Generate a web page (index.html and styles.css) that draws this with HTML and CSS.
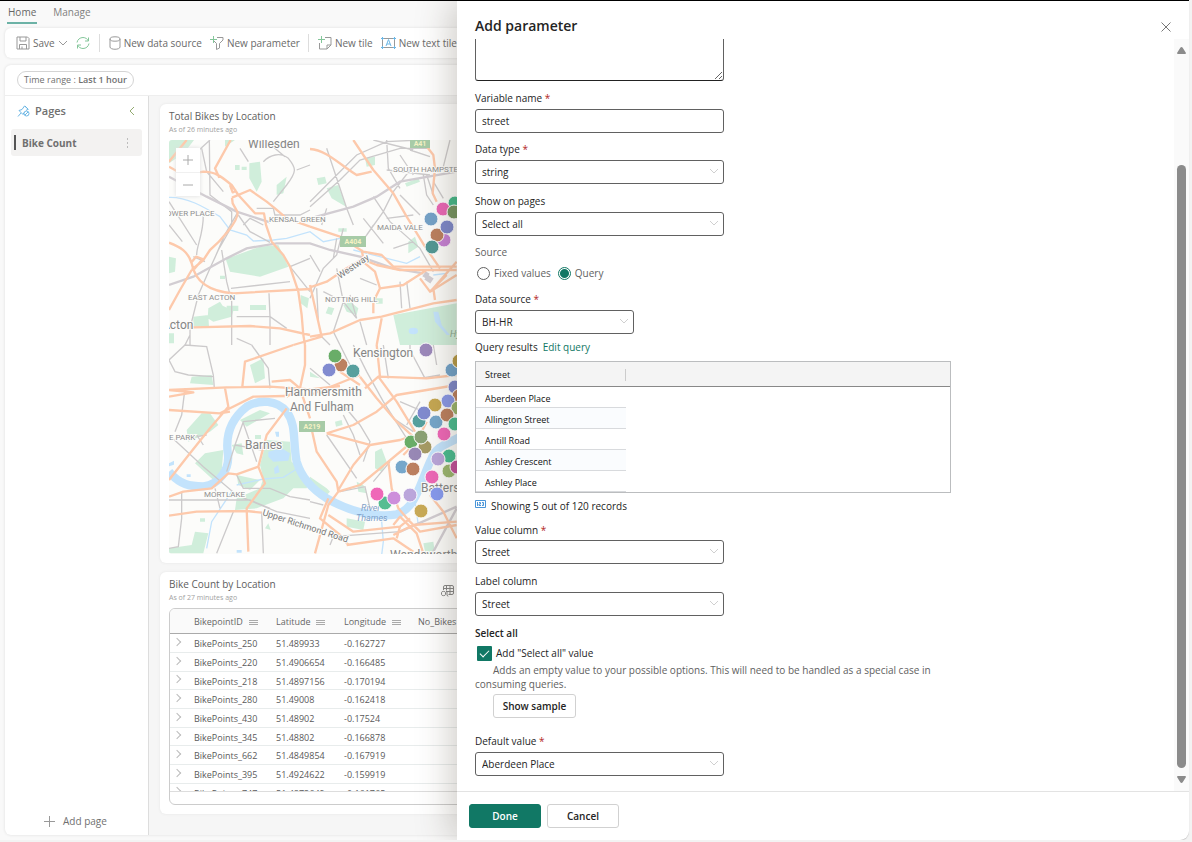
FILE: index.html
```html
<!DOCTYPE html>
<html lang="en">
<head>
<meta charset="utf-8">
<title>Dashboard - Add parameter</title>
<link rel="stylesheet" href="styles.css">
</head>
<body>
<div class="app">
  <main class="dashboard">
    <nav class="tabs">
      <a class="tab tab-active" href="#home">Home</a>
      <a class="tab" href="#manage">Manage</a>
    </nav>
    <div class="toolbar">
      <button class="tool save" type="button">
        <svg width="14" height="14" viewBox="0 0 14 14"><path d="M1 1h10.500L13 2.500V13H1zM4 1v4h6V1M3.500 13V8.500h7V13M6 10.500V13"/></svg>
        <span>Save</span>
        <svg class="caret" width="10" height="6" viewBox="0 0 10 6"><path d="M1 1l4 4 4-4"/></svg>
      </button>
      <button class="tool refresh" type="button" aria-label="Refresh">
        <svg class="green" width="16" height="14" viewBox="0 0 16 14"><path d="M2 6.500C2.500 3.500 5 1.500 8 1.500c2.500 0 4.500 1.500 5.500 3.500M13.500 1.500V5H10M14 7.500c-.5 3-3 5-6 5-2.500 0-4.500-1.500-5.500-3.500M2.500 12.500V9H6"/></svg>
      </button>
      <span class="divider"></span>
      <button class="tool" type="button">
        <svg width="12" height="14" viewBox="0 0 12 14"><ellipse cx="6" cy="3" rx="5" ry="2.200"/><path d="M1 3v8c0 3 10 3 10 0V3"/></svg>
        <span>New data source</span>
      </button>
      <button class="tool" type="button">
        <svg width="14" height="14" viewBox="0 0 14 14"><path d="M7 1.500h6v2.500L9.500 7.500V12l-3 1.500v-6L3.500 4.500"/><path class="green" d="M3.500 0v7M0 3.500h7"/></svg>
        <span>New parameter</span>
      </button>
      <span class="divider"></span>
      <button class="tool" type="button">
        <svg width="14" height="14" viewBox="0 0 14 14"><path d="M7 1.500h6v7.500l-4 4H1.500V7M13 9H9v4"/><path class="green" d="M3.500 0v7M0 3.500h7"/></svg>
        <span>New tile</span>
      </button>
      <button class="tool" type="button">
        <svg width="15" height="12" viewBox="0 0 15 12"><path d="M1.500 1.500h12v9h-12z"/><path class="blue" d="M5 9l2.500-6.500L10 9M6 7h3M0 1.500h3M1.500 0v3M12 1.500h3M13.500 0v3M0 10.500h3M1.500 9v3M12 10.500h3M13.500 9v3"/></svg>
        <span>New text tile</span>
      </button>
    </div>
    <div class="workspace">
      <div class="filters"><button class="pill" type="button">Time range : <b>Last 1 hour</b></button></div>
      <div class="work-body">
        <aside class="pages">
          <div class="pages-head">
            <svg class="blue" width="13" height="12" viewBox="0 0 13 12"><path d="M1 11.500l3-3.500M2 5.500l4 4 1-2M2 5.500l3-1 2.500-3.500L11 4 9 5.500M8 1l3.500 3.500"/><circle cx="9.500" cy="8.500" r="2.500"/><path d="M8 10l3-3"/></svg>
            <h2>Pages</h2>
            <button class="bare" type="button" aria-label="Collapse"><svg class="collapse" width="6" height="10" viewBox="0 0 6 10"><path d="M5 1L1 5l4 4"/></svg></button>
          </div>
          <div class="page-item">
            <span class="page-mark"></span><span class="page-name">Bike Count</span>
            <button class="bare" type="button" aria-label="More options"><svg class="dots" width="2" height="10" viewBox="0 0 2 10"><path d="M0 1h1M0 5h1M0 9h1"/></svg></button>
          </div>
          <button class="add-page" type="button"><svg width="11" height="11" viewBox="0 0 11 11"><path d="M5.500 0v11M0 5.500h11"/></svg>Add page</button>
        </aside>
        <section class="tiles">
          <article class="tile">
            <h3>Total Bikes by Location</h3>
            <p class="age">As of 26 minutes ago</p>
            <div class="map">
              <svg class="map-canvas" width="100%" height="414">
                <g transform="translate(-9 -5) scale(.33333)">
                  <g class="park">
                    <path d="M27 15h75l-30 40-45 30zM197 372l103-37 55-5 30 65-85 30-90-15zM268 85l32-5 5 60-15 30-22-40zM350 150l30-25-10 50-20 5zM145 520l35-20 8 12 32 15-5 18-55 15-17-10zM100 545l45-5 2 35h-47zM27 365l21 5-3 40-18 5zM270 510h48v15h-48zM225 90h14v15h-14zM245 95h15v10h-15zM200 512h35v16h-35zM27 595h15v30H27zM195 15h30l-30 20zM180 422h15v10h-15z"/>
                    <path d="M500 160l35-10 23 65-43-25zM700 540l190-35v125H720zM615 70l30-5v25l-25 5zM470 130l25-5 5 20-25 5zM550 510l20-10 25 20-5 20-30-10zM735 145l40-15 5 10-40 15zM535 280h25v10h-25zM745 320l20-15 10 30-30 20zM505 515l18 5-8 20-18-5zM422 480l25 10-5 30-20-15zM648 490h20v16h-20z"/>
                    <path d="M125 835l25 0 25 35-25 20-65 30-5-35zM135 955l55-10-5 65-25 25-55-50zM320 915l70 5 5 60 55 50-10 30-40 0-30 30-80 30-65 5 5-35 70-30 10-30-10-40zM230 1020l70 15-30 30-35-15zM27 1240l68-10 10-40 40 5-15 60H27zM240 855l60-30 30 10-70 40zM270 690l40-20 5 60-30 15zM95 725l60-5 5 30-70-5zM285 900h18v12h-18zM215 930l30-5 5 35-20-5zM120 1150h15v10h-15zM315 1180l10-15 7 20z"/>
                    <path d="M450 1025l50 35 10 10-20 20-40-50zM645 950l20-10 15 40-15 30-20-10zM560 1150l55 10-5 25-50-10zM790 1225l30-5 5 35-30-5zM525 860l20-5 3 15-20 5zM590 1040l20 10 10 25-25-5zM450 710l30 20-30-5z"/>
                  </g>
                  <g class="river">
                    <path class="river-wide" d="M27 1010C60 1050 90 1054 130 1054C180 1050 208 1000 204 960C195 900 215 850 260 815C300 792 350 795 380 830C410 870 398 920 410 980C425 1030 460 1065 500 1090C560 1125 640 1150 710 1138C770 1120 780 1040 815 970C830 930 870 925 900 905"/>
                    <path d="M27 187c53-2 103 28 153 58l30 40 50 15 20 18 60-3 40-5 70-20 40 30 50-10M580 345l40 10 120 30 40-20M820 420l40-5M665 1160l5 60-5 40M230 1050l80-18 60-5 40-25M140 1240l15-80 60-90M765 1100l10 70"/>
                    <path class="water" d="M820 530l15 0 10 40 25 30-10 0-35-40zM746 588a14 10 0 1 0 28 0a14 10 0 1 0-28 0M325 950l40-10 25 15-5 22-45 3-15-15zM342 1000l12-10 5 22-15 5zM345 890h12v15h-8zM230 1245h15v8h-15zM80 1018h12v8h-12zM27 985l15-8v12l-15 5z"/>
                  </g>
                  <g class="street">
                    <path d="M148 15l2 165 65 50v45l-40 70-25 55-35 80-25 100v50M125 40l15 70 50 60M310 80c20-20 50-30 75-10 25 30 25 40-5 80l-40 50M450 90l-40 15M240 40l25 40M120 230l10 10c0 60-20 90-20 120M27 200l83 130M185 345l15 95 15 60v130M213 460l177-20M327 475l3 70 50 35M230 545h100M390 395l60 75M233 232l-40 70-30 70M235 240l35 50 60 32M250 270l20-20 40 20M290 220h50l5 22M390 395l60-25M315 15l60 50M150 15L90 70M100 365l35 15M345 240h75l30-15M230 610l45 20M90 600l-15 30M27 270l40 50M330 545v85"/>
                    <path d="M450 200l80-80 60-60 90-40 100-5M450 215l90-80 60-60 120-35 90 0M500 40l30 90 30 90 20 50M500 220l-15 50M610 250l60 75M750 105l-50 65-30 60-50 70M680 105l130 15M680 15l5 85 35 60M640 15l120 30M450 490l40-90 40-40 20-80M530 400l20 100 40 50M470 460l5 100M640 185l50 75 90 80 40 70M720 440l5 80M740 440l10 80M570 480l20 70M790 120l10 60 20 30M800 120l20 60M680 250l80-10M700 340l60-20M450 360l30 50M530 310l-10 60M490 470l50 25M600 430l50 20M870 15l-20 80M600 560l20 70M550 500l-30 90 20 40M480 600l30 30M750 45l60 20M720 60l40 60M640 270l-40 60M820 140l30 50M720 180l60 60"/>
                    <path d="M27 675l48-45 65 5 20 85 3 40M27 675l18 35 40 10 75 5M75 760l-10 80-20 50M345 850l-95 10-25 70-25 80M250 865l40 115M220 1130l-50 125M305 1130l5 125M65 1070v80l-10 85-28 5M230 1020l20 40 80 0 60 25 60 10M275 630l50 70 5 60M165 1060l15 60M27 1095h243l60 25M27 900l33 30 70 65 100 85 120 50 100 20M110 900l20 30M225 930l80 15M140 900l-30 5"/>
                    <path d="M550 810l50 60 30 50-20 60M500 900l90 130M580 630l40 80 50 90 70 110M670 630l15 100M750 645l45 85M450 1100l40 10M510 1230l10-25 200-15M540 1070l75-15 15 65M780 730l60-10M550 840l30 60 20 60M690 980l-50 60M450 700l60 50M540 630l30 60M750 630v15M820 630l10 60M720 800l70 30M700 850l60 40M780 800l-40 70"/>
                  </g>
                  <g class="rail">
                    <path d="M27 125l113 60 90 45 100 32M27 450l73-25 100-55 60-30 90-15h100l60 20 90 20 100 35 90 15"/>
                    <path d="M450 250l130-35 70-30 70-45 170-30M720 1190l170-75M820 1250l70-130"/>
                    <path class="station" d="M792 416l12 8M798 426l18 12"/>
                  </g>
                  <g class="road">
                    <path d="M212 15l-47 85 13 28M80 15L27 80M27 95l45 25 58-10c40 0 60 20 85 40l20 30 50 55h27l6 35 17 50 35 40 20 35 25 75 10 70 5 60 5 30M210 150l8 22 12-6M216 188l54-23 50 35 25 20 35 30 70 25M216 188l2 17 15 27c2 28-53 88-83 113l-20 30-35 30M27 323c33 12 58 27 68 62 10 55 55 85 125 90l230-13M92 385l16-20 20 7-25 30M95 405l-35 60-33 60M100 577l170-4 90 7 90 20"/>
                    <path d="M450 42c50 3 90 48 140 78l45-10M580 15l60 90 60 70 40 70 55 90 45 65M785 15l35 45 5 40-7 75 12 25M450 275l90 30 70 45 55 10 35 35h190M600 370l50 20 70 15h170M605 345l5 25M450 457l50-17 60-40 50-30M615 385l30 25 15 50-20 40v35M660 460l70-10 70-45M450 605l60-10 90-40 65-10 155-40 70-10M450 450l35 155-85 25M665 550l-15 80M825 495l-5-35 70-80M780 430l30 40 50-50M810 470l80-50"/>
                    <path d="M27 765l173-8 130-2 120 8 90-10M27 785l73-13-73-7M27 825l153 10 30-15 70-35 95-2M195 760l10 55-55 65-60 75-63 80M400 630l-145 50-8 75M435 630v60l-15 70 30 90M27 1085l43-15 85-10 50-45 25 3 65-23 20 50-55 75 5 130M27 1142l83-12 150-2 45 5M380 820l-60 80-25 95M335 740l55-5 30 25-40 25M180 835l30-5"/>
                    <path d="M450 860l20 90 60 90 5 30-30 40-40 145M500 895l80-25 70-40 60-50 180-30M500 895l130 35 90-15 30-10M600 725l50 65 60 70 50 45M615 760l40-35 145 5 90-10M655 725l55 75 55 90M535 1070l65-20 85-70 60-50M685 980l10 80 20 60 35 40 30 30 110-20M535 1065l45-75 50-60M505 1140l45 30 30 20 140-15 30-25M560 1230l140-20 60 40M720 1175l-10 35M810 1080l40 50 40 80M450 780l150-60M650 630l10 95M540 710l60 40M505 1090l-25 60 60 50 25 30M700 1200l60-30 130-10M700 1170l20-25 50 50 20 60M730 960l40-40 30-60"/>
                  </g>
                </g>
                <g class="badge-road"><rect x="171" y="96" width="26" height="11"/><rect x="130" y="281" width="26" height="11"/><rect x="241" y="-3" width="20" height="11"/>
                  <text x="184" y="104">A404</text><text x="143" y="289">A219</text><text x="251" y="6">A41</text></g>
                <g class="place">
                  <text x="79" y="8">Willesden</text><text x="-7" y="189">Acton</text><text x="184" y="217">Kensington</text><text x="116" y="256">Hammersmith</text><text x="121" y="271">And Fulham</text><text x="76" y="309">Barnes</text><text x="252" y="352">Battersea</text><text x="221" y="419">Wandsworth</text>
                </g>
                <g class="district">
                  <text x="-8" y="76">POWER PLACE</text><text x="100" y="82">KENSAL GREEN</text><text x="224" y="32">SOUTH HAMPSTEAD</text><text x="208" y="90">MAIDA VALE</text><text x="19" y="160">EAST ACTON</text><text x="156" y="162">NOTTING HILL</text><text x="0" y="300">E PARK</text><text x="35" y="357">MORTLAKE</text>
                </g>
                <g class="water-name"><text x="192" y="371">River</text><text x="187" y="381">Thames</text><text class="hyde" x="281" y="197">Hyde</text></g>
                <g class="road-name"><text transform="translate(171 139) rotate(-34)">Westway</text><text transform="translate(93 375) rotate(18)">Upper Richmond Road</text></g>
                <g class="pins" transform="translate(141 -5)">
                  <circle cx="145" cy="68" r="7" fill="#45b98a"/><circle cx="133" cy="74" r="7" fill="#ea67b6"/><circle cx="144" cy="77" r="7" fill="#779663"/><circle cx="121" cy="84" r="7" fill="#75a2c8"/><circle cx="134" cy="105" r="7" fill="#c681d4"/><circle cx="127" cy="100" r="7" fill="#bc8060"/><circle cx="137" cy="92" r="7" fill="#7e88cb"/><circle cx="122" cy="112" r="7" fill="#539895"/>
                </g>
                <g class="pins" transform="translate(141 205)">
                  <circle cx="31" cy="20" r="7" fill="#bc8060"/><circle cx="25" cy="11" r="7" fill="#69ad68"/><circle cx="19" cy="25" r="7" fill="#818bd0"/><circle cx="43" cy="26" r="7" fill="#57a09e"/><circle cx="116" cy="5" r="7" fill="#9c89bb"/><circle cx="142" cy="25" r="7" fill="#72a3ca"/><circle cx="149" cy="16" r="7" fill="#b79b48"/><circle cx="145" cy="42" r="7" fill="#7e88cb"/><circle cx="149" cy="51" r="7" fill="#bc8060"/><circle cx="138" cy="56" r="7" fill="#8998e7"/><circle cx="125" cy="60" r="7" fill="#c6a853"/><circle cx="109" cy="76" r="7" fill="#57a09e"/><circle cx="114" cy="68" r="7" fill="#818bd0"/><circle cx="126" cy="77" r="7" fill="#76a7cb"/><circle cx="148" cy="63" r="7" fill="#9bb66f"/><circle cx="137" cy="70" r="7" fill="#bc8060"/><circle cx="145" cy="79" r="7" fill="#49bd91"/><circle cx="134" cy="89" r="7" fill="#ef68b8"/><circle cx="101" cy="97" r="7" fill="#69ad68"/><circle cx="115" cy="102" r="7" fill="#a69b65"/><circle cx="111" cy="92" r="7" fill="#8ba275"/><circle cx="105" cy="109" r="7" fill="#9888b5"/><circle cx="139" cy="111" r="7" fill="#49bd91"/><circle cx="128" cy="114" r="7" fill="#bba6db"/><circle cx="139" cy="126" r="7" fill="#9bb66f"/><circle cx="147" cy="122" r="7" fill="#c3519c"/><circle cx="92" cy="122" r="7" fill="#76a7cb"/><circle cx="103" cy="124" r="7" fill="#bc8060"/><circle cx="122" cy="132" r="7" fill="#ef68b8"/><circle cx="75" cy="158" r="7" fill="#55bd91"/><circle cx="67" cy="149" r="7" fill="#ef68b8"/><circle cx="84" cy="153" r="7" fill="#cd8edb"/><circle cx="100" cy="150" r="7" fill="#bba6db"/><circle cx="127" cy="149" r="7" fill="#879bf0"/><circle cx="111" cy="166" r="7" fill="#c9aa57"/>
                </g>
              </svg>
              <div class="map-zoom"><button type="button" aria-label="Zoom in"><svg width="10" height="10" viewBox="0 0 10 10"><path d="M5 0v10M0 5h10"/></svg></button><button type="button" aria-label="Zoom out"><svg width="10" height="10" viewBox="0 0 10 10"><path d="M0 5h10"/></svg></button></div>
            </div>
          </article>
          <article class="tile">
            <div class="tile-top">
              <div><h3>Bike Count by Location</h3><p class="age">As of 27 minutes ago</p></div>
              <svg class="grid-icon" width="13" height="12" viewBox="0 0 13 12"><path d="M2.500 5V2q0-1.500 1.500-1.500h7q1.500 0 1.500 1.500v6q0 1.500-1.500 1.500H7.500M2.500 3.500h10M5.500.5v5M9 .5v9M5 6.500h7.500M.5 7.500c0-1.500 4-1.500 4 0v2c0 1.500-4 1.500-4 0zM6 7v3l1 1.500"/></svg>
            </div>
            <div class="grid-box">
              <div class="grid-clip">
              <table class="grid">
                <thead><tr><th class="expand"></th><th class="id"><span>BikepointID</span></th><th class="lat"><span>Latitude</span></th><th class="lon"><span>Longitude</span></th><th class="num">No_Bikes</th></tr></thead>
                <tbody>
                  <tr><td><i></i></td><td>BikePoints_250</td><td>51.489933</td><td>-0.162727</td><td></td></tr>
                  <tr><td><i></i></td><td>BikePoints_220</td><td>51.4906654</td><td>-0.166485</td><td></td></tr>
                  <tr><td><i></i></td><td>BikePoints_218</td><td>51.4897156</td><td>-0.170194</td><td></td></tr>
                  <tr><td><i></i></td><td>BikePoints_280</td><td>51.49008</td><td>-0.162418</td><td></td></tr>
                  <tr><td><i></i></td><td>BikePoints_430</td><td>51.48902</td><td>-0.17524</td><td></td></tr>
                  <tr><td><i></i></td><td>BikePoints_345</td><td>51.48802</td><td>-0.166878</td><td></td></tr>
                  <tr><td><i></i></td><td>BikePoints_662</td><td>51.4849854</td><td>-0.167919</td><td></td></tr>
                  <tr><td><i></i></td><td>BikePoints_395</td><td>51.4924622</td><td>-0.159919</td><td></td></tr>
                  <tr><td><i></i></td><td>BikePoints_747</td><td>51.4873649</td><td>-0.161765</td><td></td></tr>
                </tbody>
              </table>
              </div>
            </div>
          </article>
        </section>
      </div>
    </div>
  </main>

  <form class="panel">
    <header class="panel-head">
      <h1>Add parameter</h1>
      <button class="bare" type="button" aria-label="Close"><svg width="10" height="10" viewBox="0 0 10 10"><path d="M.5.500l9 9M9.500.500l-9 9"/></svg></button>
    </header>
    <div class="panel-scroll">
      <div class="fields">
        <textarea class="description" aria-label="Description"></textarea>
        <div class="field">
          <label for="variable">Variable name <em>*</em></label>
          <input class="control" id="variable" type="text" value="street">
        </div>
        <div class="field">
          <label for="type">Data type <em>*</em></label>
          <div class="select"><select class="control" id="type"><option>string</option></select><svg width="10" height="6" viewBox="0 0 10 6"><path d="M1 1l4 4 4-4"/></svg></div>
        </div>
        <div class="field wider">
          <label for="pages">Show on pages</label>
          <div class="select"><select class="control" id="pages"><option>Select all</option></select><svg width="10" height="6" viewBox="0 0 10 6"><path d="M1 1l4 4 4-4"/></svg></div>
        </div>
        <fieldset class="source">
          <legend>Source</legend>
          <div class="radios">
            <label><input type="radio" name="source">Fixed values</label>
            <label><input type="radio" name="source" checked>Query</label>
          </div>
        </fieldset>
        <div class="field narrow">
          <label for="data-source">Data source <em>*</em></label>
          <div class="select"><select class="control" id="data-source"><option>BH-HR</option></select><svg width="10" height="6" viewBox="0 0 10 6"><path d="M1 1l4 4 4-4"/></svg></div>
        </div>
        <div class="query-line"><span>Query results</span><a href="#query">Edit query</a></div>
        <div class="results">
          <table>
            <thead><tr><th><span>Street</span></th><th></th></tr></thead>
            <tbody>
              <tr><td>Aberdeen Place</td></tr>
              <tr><td>Allington Street</td></tr>
              <tr><td>Antill Road</td></tr>
              <tr><td>Ashley Crescent</td></tr>
              <tr><td>Ashley Place</td></tr>
            </tbody>
          </table>
        </div>
        <div class="records">
          <svg width="11" height="8" viewBox="0 0 11 8"><path d="M.5.500h10v7H.5zM2.500 2v4M4 2.500h1.500V4H4v1.500h2M7 2.500h1.500v3H7M7.500 4h1"/></svg>
          <span>Showing 5 out of 120 records</span>
        </div>
        <div class="field tight">
          <label for="value-column">Value column <em>*</em></label>
          <div class="select"><select class="control" id="value-column"><option>Street</option></select><svg width="10" height="6" viewBox="0 0 10 6"><path d="M1 1l4 4 4-4"/></svg></div>
        </div>
        <div class="field wider">
          <label for="label-column">Label column</label>
          <div class="select"><select class="control" id="label-column"><option>Street</option></select><svg width="10" height="6" viewBox="0 0 10 6"><path d="M1 1l4 4 4-4"/></svg></div>
        </div>
        <div class="select-all">
          <h2>Select all</h2>
          <label class="check"><input type="checkbox" checked>Add "Select all" value</label>
          <p>Adds an empty value to your possible options. This will need to be handled as a special case in consuming queries.</p>
          <button class="btn sample" type="button">Show sample</button>
        </div>
        <div class="field">
          <label for="default-value">Default value <em>*</em></label>
          <div class="select"><select class="control" id="default-value"><option>Aberdeen Place</option></select><svg width="10" height="6" viewBox="0 0 10 6"><path d="M1 1l4 4 4-4"/></svg></div>
        </div>
      </div>
      <div class="scrollbar" aria-hidden="true">
        <svg width="9" height="7" viewBox="0 0 9 7"><path d="M4.500 0Q5.200 0 5.700.800L9 6Q9 7 8 7H1Q0 7 0 6L3.300.800Q3.800 0 4.500 0z"/></svg>
        <div class="track"><div class="thumb"></div></div>
        <svg width="9" height="7" viewBox="0 0 9 7"><path d="M4.500 7Q5.200 7 5.700 6.200L9 1Q9 0 8 0H1Q0 0 0 1L3.300 6.200Q3.800 7 4.500 7z"/></svg>
      </div>
    </div>
    <footer class="panel-foot">
      <button class="btn primary" type="button">Done</button>
      <button class="btn" type="button">Cancel</button>
    </footer>
  </form>
</div>
</body>
</html>
```
FILE: styles.css
```css
*, *::before, *::after { box-sizing: border-box; }
body {
  margin: 0;
  background: #f3f3f3;
  color: #242424;
  font: 10px/16px "Open Sans", "Noto Sans", sans-serif;
}
h1, h2, h3, p { margin: 0; font-weight: 400; }
button, input, select, textarea { font: inherit; color: inherit; }
button { padding: 0; cursor: pointer; }
svg { display: block; flex: none; fill: none; stroke: currentColor; }

.app {
  position: relative;
  min-height: calc(100vh - 2px);
  margin-right: 3px;
  display: flex;
  overflow: hidden;
  border-top: 1px solid #000;
  border-radius: 0 0 9px 0;
  background: #f9f9f9;
  box-shadow: 0 1px 1px #ccc;
}
.bare { border: 0; background: none; display: flex; }

/* Dimmed dashboard behind the panel */
.dashboard {
  flex: 1;
  min-width: 0;
  display: flex;
  flex-direction: column;
  padding: 0 5px 5px;
  color: #707070;
}
.tabs { display: flex; gap: 15px; padding: 3px 2px 4px; }
.tab { padding: 0 1px 2px; color: #808080; text-decoration: none; border-bottom: 2px solid transparent; }
.tab-active { color: #666; border-color: #6cb2a6; }
.toolbar {
  display: flex;
  align-items: center;
  height: 30px;
  padding: 0 11px;
  background: #fff;
  border-radius: 6px;
  box-shadow: 0 0 3px #ddd;
}
.tool { display: flex; align-items: center; gap: 3px; border: 0; margin-right: 8px; background: none; color: #6a6a6a; white-space: nowrap; }
.tool svg { color: #999; }
.tool.save { margin-right: 7px; }
.green, .tool svg.green { color: #84c69a; stroke: #84c69a; }
.blue { color: #7aaee6; stroke: #6cb6e4; }
.divider { width: 1px; height: 18px; margin-right: 9px; background: #ddd; }
.workspace {
  flex: 1;
  display: flex;
  flex-direction: column;
  margin-top: 7px;
  background: #fff;
  border-radius: 6px;
  box-shadow: 0 0 3px #ddd;
}
.filters { padding: 6px 12px; border-bottom: 1px solid #eee; }
.pill {
  display: block;
  height: 18px;
  padding: 0 6px;
  border: 1px solid #d4d4d4;
  border-radius: 9px;
  background: #fff;
  font-size: 9px;
  line-height: 16px;
}
.pill b { font-weight: 600; }
.work-body { flex: 1; display: flex; min-width: 0; }
.pages { width: 144px; flex: none; display: flex; flex-direction: column; border-right: 1px solid #ddd; padding: 7px 6px 6px; }
.pages-head { display: flex; align-items: center; gap: 5px; padding: 0 7px 0 6px; }
.pages-head h2 { flex: 1; font-size: 11px; font-weight: 600; line-height: 16px; }
.collapse { color: #92aa70; }
.page-item { display: flex; align-items: center; height: 27px; margin-top: 10px; padding: 0 13px 0 3px; background: #f3f2f1; border-radius: 3px; }
.page-mark { width: 2px; height: 15px; background: #555; margin-right: 6px; }
.page-name { flex: 1; font-weight: 700; }
.dots { color: #888; }
.add-page { margin: auto auto 0 33px; display: flex; align-items: center; gap: 8px; border: 0; background: none; }
.add-page svg { color: #999; }
.tiles { flex: 1; min-width: 0; display: flex; flex-direction: column; gap: 9px; padding: 8px 11px 20px; background: #f6f6f6; }
.tile { padding: 4px 9px 9px; background: #fff; border-radius: 6px; box-shadow: 0 0 3px #e4e4e4; }
.tile h3 { color: #606060; font-size: 10px; line-height: 16px; }
.age { color: #a2a2a2; font-size: 7px; line-height: 12px; }
.map { position: relative; height: 414px; margin-top: 4px; overflow: hidden; border-radius: 3px; background: #fcfcfa; }
.park path { fill: #d0eedb; stroke: none; }
.river path { stroke: #c3e3fc; stroke-width: 4; }
.river .river-wide { stroke-width: 25; }
.river .water { fill: #c3e3fc; stroke: none; }
.street path { stroke: #cccacb; stroke-width: 4; }
.rail path { stroke: #d2cdd2; stroke-width: 7; }
.rail .station { stroke-width: 18; }
.road path { stroke: #fdc9ab; stroke-width: 7; stroke-linejoin: round; }
.map-canvas text { stroke: #fcfcfa; stroke-width: 2px; paint-order: stroke; font-family: Roboto, sans-serif; }
.badge-road rect { fill: #a7cba7; stroke: none; }
.map-canvas .badge-road text { fill: #f5f2c4; stroke: none; font-size: 7px; font-weight: 700; text-anchor: middle; }
.place text { fill: #858585; font-size: 12px; }
.district text { fill: #909090; font-size: 8px; }
.water-name text { fill: #7fa0c8; font-size: 9px; font-style: italic; }
.map-canvas .water-name text { stroke: none; }
.water-name .hyde { fill: #8aa890; }
.road-name text { fill: #777; font-size: 9px; }
.pins circle { stroke: #fff; stroke-width: 1; }
.map-zoom { position: absolute; left: 7px; top: 8px; width: 24px; background: #fff; box-shadow: 0 0 4px #ddd; }
.map-zoom button { width: 24px; height: 24px; display: flex; align-items: center; justify-content: center; border: 0; background: none; color: #aaa; }
.map-zoom button + button { border-top: 1px solid #f0f0f0; }
.tile-top { position: relative; }
.grid-icon { position: absolute; left: 272px; top: 9px; color: #888; }
.grid-box { margin-top: 4px; height: 197px; border: 1px solid #ccc; border-radius: 6px; overflow: hidden; }
.grid-clip { height: 183px; overflow: hidden; border-bottom: 1px solid #ddd; }
.grid { width: 100%; table-layout: fixed; border-collapse: separate; border-spacing: 0; font-size: 9px; line-height: 12px; color: #5a5a5a; }
.grid th { height: 25px; padding: 2px 0 0 7px; text-align: left; font-weight: 400; color: #666; background: #fafafa; border-bottom: 1px solid #aaa; }
.grid th.expand { width: 17px; padding: 0; }
.grid th.id { width: 80px; }
.grid th.lat { width: 70px; padding-left: 9px; }
.grid th.lon { width: 74px; }
.grid th span { display: flex; align-items: center; gap: 6px; }
.grid th span::after { content: ""; width: 9px; height: 5px; border-top: 1px solid #aaa; border-bottom: 1px solid #aaa; background: linear-gradient(#aaa, #aaa) 0 1px / 9px 1px no-repeat; }
.grid td { height: 19px; padding: 2px 0 0 7px; border-bottom: 1px solid #e8ecec; }
.grid tr:nth-child(3n) td { height: 18px; }
.grid td:first-child { padding: 0; }
.grid td:nth-child(3) { padding-left: 9px; }
.grid td i { display: block; width: 6px; height: 6px; margin: -3px 0 0 4px; border: solid #bbb; border-width: 1px 1px 0 0; transform: rotate(45deg); }

/* Side panel */
.panel {
  position: absolute;
  inset: 0 0 0 457px;
  display: flex;
  flex-direction: column;
  background: #fff;
  border-radius: 0 0 9px 0;
  box-shadow: -5px 0 36px rgba(60, 50, 30, .26);
}
.panel-head { display: flex; align-items: center; justify-content: space-between; height: 38px; padding: 12px 18px 0; }
.panel-head h1 { font-size: 14px; line-height: 20px; font-weight: 600; }
.panel-head button { margin-top: 2px; color: #777; }
.panel-scroll { flex: 1; display: flex; justify-content: space-between; overflow: hidden; border-bottom: 1px solid #e3e3e3; }
.fields { width: 476px; margin-left: 18px; }
.description { display: block; width: 249px; height: 42px; border: 1px solid #616161; border-top: 0; border-bottom-color: #222; border-radius: 0 0 3px 3px; background: #fff; margin-bottom: 9px; }
.field { width: 249px; margin-bottom: 8px; }
.field label { display: block; margin-bottom: 3px; }
.field em { color: #b3261e; font-style: normal; }
.wider { margin-top: 9px; }
.tight label { margin-bottom: 2px; }
.narrow { width: 159px; margin-bottom: 5px; }
.control { display: block; width: 100%; height: 24px; padding: 0 6px; border: 1px solid #616161; border-radius: 3px; background: #fff; appearance: none; outline: 0; }
.select { position: relative; }
.select svg { position: absolute; right: 5px; top: 8px; color: #d0d0d0; pointer-events: none; }
.source { margin: 0 0 9px; padding: 0; border: 0; color: #616161; }
.source legend { padding: 0; }
.radios { display: flex; gap: 7px; padding: 4px 0 0 2px; }
.radios label { display: flex; align-items: center; gap: 4px; height: 18px; }
.radios input { appearance: none; width: 13px; height: 13px; margin: 0; border: 1px solid #616161; border-radius: 50%; }
.radios input:checked { border-color: #117865; background: radial-gradient(circle, #117865 4px, #fff 5px); }
.query-line { display: flex; gap: 5px; }
.query-line a { color: #117865; text-decoration: none; }
.results { height: 132px; margin-top: 6px; border: 1px solid #bbbdbf; overflow: hidden; }
.results table { width: 100%; table-layout: fixed; border-collapse: separate; border-spacing: 0; font-size: 9px; line-height: 12px; color: #111; }
.results th { height: 25px; padding: 2px 0 0; text-align: left; font-weight: 400; background: #f4f4f4; border-bottom: 1px solid #888; }
.results th:first-child { width: 150px; }
.results th span { display: block; padding-left: 9px; border-right: 1px solid #ccc; }
.results td { height: 21px; padding: 3px 9px 0; border-bottom: 1px solid #d8dadd; }
.results tr:nth-child(even) td { background: #fafcfe; }
.records { display: flex; gap: 5px; margin: 5px 0 8px; }
.records svg { margin-top: 2px; color: #4a95d8; }
.select-all h2 { font-size: 10px; line-height: 16px; font-weight: 600; margin-top: 9px; }
.check { display: flex; align-items: center; gap: 4px; height: 16px; margin: 4px 0 2px 2px; }
.check input { appearance: none; display: flex; justify-content: center; width: 15px; height: 15px; margin: 0; background: #117865; border-radius: 1px; }
.check input::before { content: ""; width: 9px; height: 5px; margin-top: 4px; border: solid #fff; border-width: 0 0 1px 1px; transform: rotate(-45deg); }
.select-all p { color: #616161; line-height: 14px; text-indent: 18px; }
.btn { display: block; width: 72px; height: 24px; border: 1px solid #d1d1d1; border-radius: 3px; background: #fff; font-weight: 600; line-height: 20px; }
.sample { width: 83px; margin: 3px 0 15px 18px; }
.primary { border-color: #117865; background: #117865; color: #fff; }
.panel-foot { display: flex; gap: 6px; padding: 12px; }
.scrollbar { width: 15px; display: flex; flex-direction: column; align-items: center; padding: 8px 0; background: #fafafa; }
.scrollbar svg { fill: #8b8b8b; stroke: none; }
.track { flex: 1; display: flex; flex-direction: column; padding: 111px 0 8px; }
.thumb { flex: 1; width: 9px; border-radius: 5px; background: #8b8b8b; }
```
